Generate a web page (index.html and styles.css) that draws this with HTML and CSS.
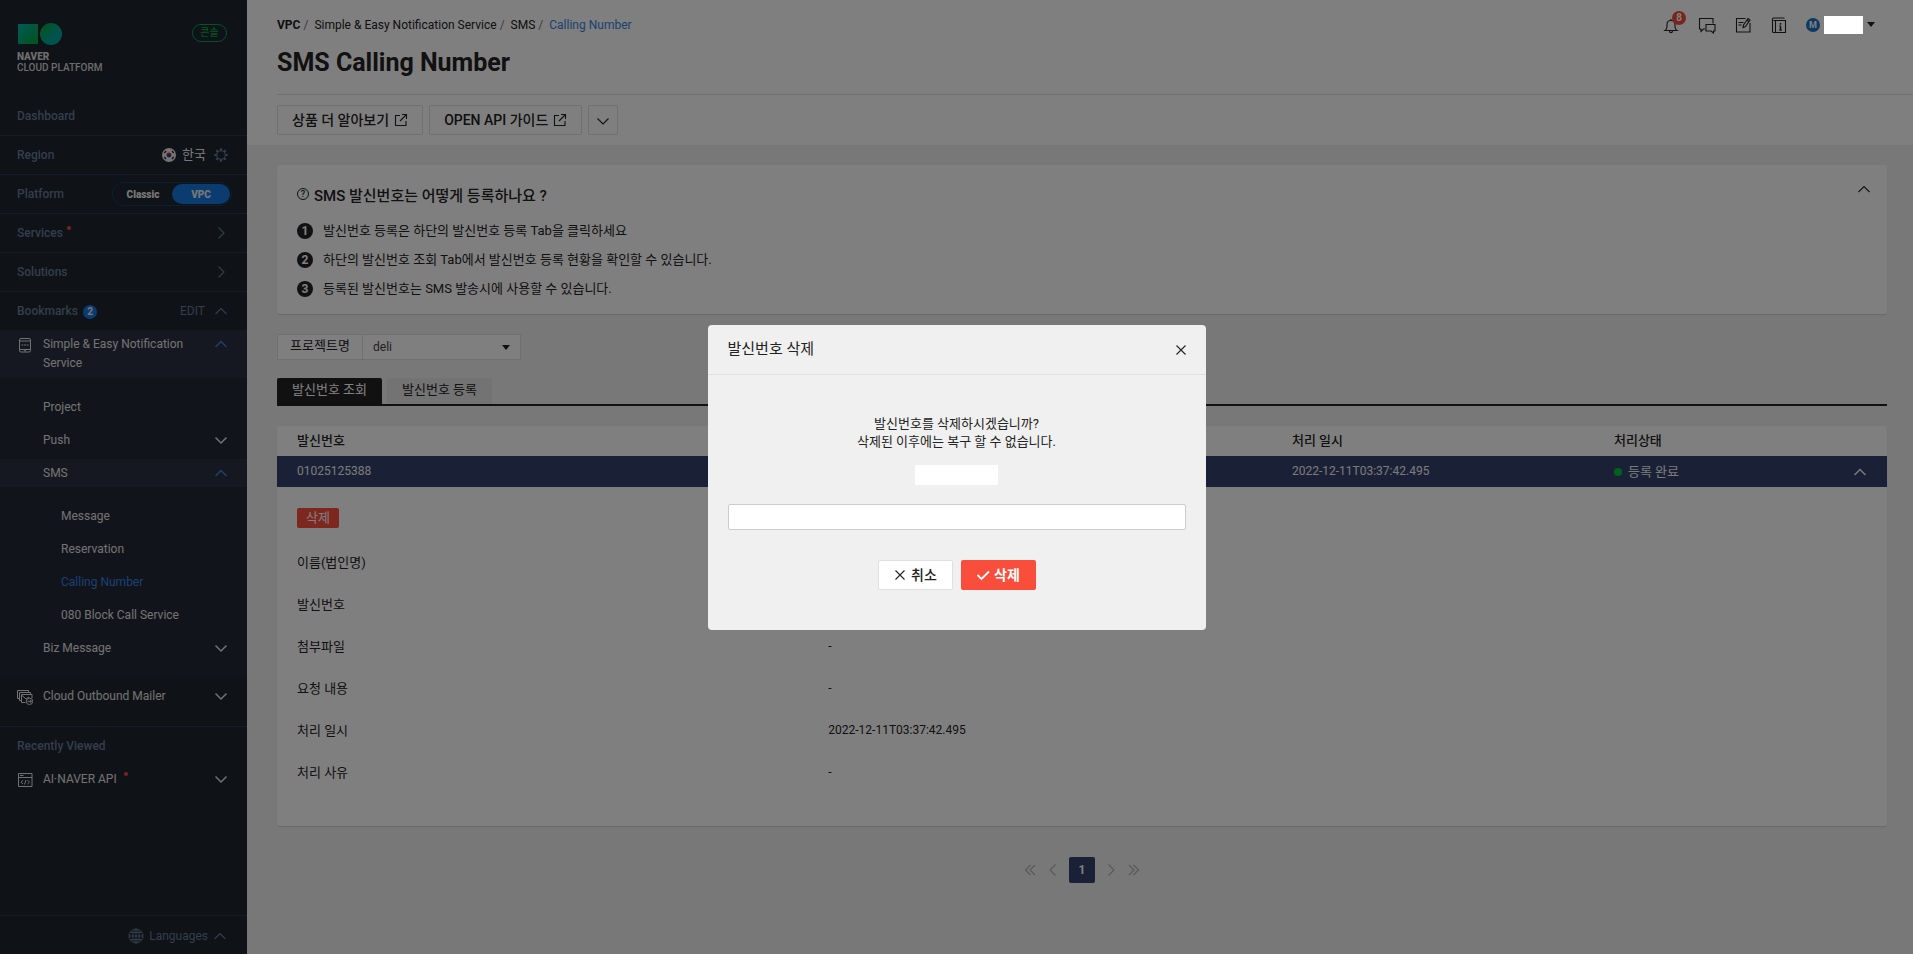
FILE: index.html
```html
<!DOCTYPE html>
<html lang="ko">
<head>
    <meta charset="UTF-8">
    <meta name="viewport" content="width=device-width, initial-scale=1.0">
    <title>SMS Calling Number</title>
    <link rel="stylesheet" href="styles.css">
</head>
<body>
    <svg class="sprite" width="0" height="0" aria-hidden="true">
        <symbol id="up" viewBox="0 0 14 14"><path d="M1.500 10 7 4.500 12.500 10"/></symbol>
        <symbol id="down" viewBox="0 0 14 14"><path d="M1.500 4.500 7 10 12.500 4.500"/></symbol>
        <symbol id="right" viewBox="0 0 14 14"><path d="M4.500 1.500 10 7 4.500 12.500"/></symbol>
        <symbol id="left" viewBox="0 0 14 14"><path d="M9.500 1.500 4 7 9.500 12.500"/></symbol>
        <symbol id="close" viewBox="0 0 14 14"><path d="M2.500 2.500l9 9M11.500 2.500l-9 9"/></symbol>
        <symbol id="external" viewBox="0 0 14 14"><path d="M6 2.500H1.500v10H12V8M8 1.500h4.500V6M12.500 1.500 6 8"/></symbol>
    </svg>

    <div class="app">
        <aside class="sidebar">
            <div class="brand">
                <a class="logo" href="#">
                    <svg width="46" height="22" viewBox="0 0 46 22">
                        <defs>
                            <linearGradient id="g1" x1="0" y1="0" x2="1" y2="1"><stop offset="0" stop-color="#00b3b0"/><stop offset="1" stop-color="#00a832"/></linearGradient>
                            <linearGradient id="g2" x1="0" y1="0" x2="1" y2="1"><stop offset=".1" stop-color="#00a83c"/><stop offset=".6" stop-color="#00a89a"/></linearGradient>
                        </defs>
                        <path d="M1 1h20v20H1z" fill="url(#g1)"/>
                        <circle cx="34" cy="11" r="11" fill="url(#g2)"/>
                    </svg>
                    <strong>NAVER</strong>
                    <span>CLOUD PLATFORM</span>
                </a>
                <a class="console" href="#">콘솔</a>
            </div>

            <nav>
                <div class="row"><a href="#">Dashboard</a></div>
                <div class="row">
                    <span>Region</span>
                    <button class="region">
                        <svg width="14" height="14" viewBox="0 0 14 14">
                            <circle cx="7" cy="7" r="7" fill="#e8e8e8"/>
                            <path d="M4.500 7a2.500 2.500 0 0 1 5 0z" fill="#c8203a"/><path d="M4.500 7a2.500 2.500 0 0 0 5 0z" fill="#1c3f94"/>
                            <path d="M2.300 5 4 3M10 3l1.700 2M2.300 9 4 11M10 11l1.700-2" stroke="#222" stroke-width="1.300"/>
                        </svg>
                        한국
                        <svg class="icon gear" width="14" height="14" viewBox="0 0 14 14"><circle cx="7" cy="7" r="4.300"/><path d="M7 .3v2.400M7 11.300v2.400M.3 7h2.400M11.300 7h2.400M2.300 2.300l1.600 1.600M10.100 10.100l1.600 1.600M11.700 2.300l-1.600 1.600M3.900 10.100l-1.600 1.600" stroke-width="2.200"/></svg>
                    </button>
                </div>
                <div class="row platform">
                    <span>Platform</span>
                    <div class="toggle"><button>Classic</button><button class="on">VPC</button></div>
                </div>
                <div class="row"><a href="#">Services<i class="new"></i></a><svg class="icon"><use href="#right"/></svg></div>
                <div class="row"><a href="#">Solutions</a><svg class="icon"><use href="#right"/></svg></div>
                <div class="row last">
                    <span>Bookmarks<b class="count">2</b></span>
                    <button class="edit">EDIT <svg class="icon"><use href="#up"/></svg></button>
                </div>

                <a class="service open" href="#">
                    <svg class="icon s-icon" viewBox="0 0 16 16"><rect x="2.500" y="1.500" width="11" height="13.500" rx="1.500"/><path d="M2.500 4h11M2.500 12.500h11M4.500 8h1.800M7.100 8h1.800M9.700 8h1.800M7 13.800h2"/></svg>
                    <span>Simple &amp; Easy Notification Service</span>
                    <svg class="icon"><use href="#up"/></svg>
                </a>
                <ul class="menu">
                    <li><a href="#">Project</a></li>
                    <li><a href="#">Push<svg class="icon"><use href="#down"/></svg></a></li>
                    <li>
                        <a class="open" href="#">SMS<svg class="icon"><use href="#up"/></svg></a>
                        <ul class="submenu">
                            <li><a href="#">Message</a></li>
                            <li><a href="#">Reservation</a></li>
                            <li><a class="current" href="#">Calling Number</a></li>
                            <li><a href="#">080 Block Call Service</a></li>
                        </ul>
                    </li>
                    <li><a href="#">Biz Message<svg class="icon"><use href="#down"/></svg></a></li>
                </ul>
                <a class="service mailer" href="#">
                    <svg class="icon s-icon" viewBox="0 0 16 16"><path d="M2.500 9.500H.5V1.500h11v1.500M4.500 11.500H2.500V3.500h11V5M8.500 13.500h-4v-8H15V9M4.500 6l4.500 4 3-2"/><circle cx="12.500" cy="12.300" r="3.200"/><path d="M10.500 12.300h4M13 10.800l1.500 1.500-1.500 1.500"/></svg>
                    <span>Cloud Outbound Mailer</span>
                    <svg class="icon"><use href="#down"/></svg>
                </a>
                <div class="recent">
                    <h2>Recently Viewed</h2>
                    <a class="service" href="#">
                        <svg class="icon s-icon" viewBox="0 0 16 16"><path d="M1.500 1.500h13.500v13H1.500zM1.500 5.500H15M3 3.500h3.500M6 8.200 4 10.200l2 1.800M10.500 8.200l2 2-2 1.800M9 8l-1.500 4.500"/></svg>
                        <span>AI·NAVER API<i class="new"></i></span>
                        <svg class="icon"><use href="#down"/></svg>
                    </a>
                </div>
            </nav>

            <button class="languages">
                <svg class="icon globe" width="16" height="16" viewBox="0 0 16 16"><circle cx="8" cy="8" r="7"/><ellipse cx="8" cy="8" rx="3.200" ry="7"/><path d="M8 1v14M1 8h14M2.200 4.500h11.600M2.200 11.500h11.600"/></svg>
                Languages
                <svg class="icon"><use href="#up"/></svg>
            </button>
        </aside>

        <main class="page">
            <header class="header">
                <div class="topbar">
                    <nav class="breadcrumb">
                        <a href="#"><b>VPC</b></a><i>/</i><a href="#">Simple &amp; Easy Notification Service</a><i>/</i><a href="#">SMS</a><i>/</i><a class="current" href="#">Calling Number</a>
                    </nav>
                    <div class="tools">
                        <button class="bell" aria-label="알림">
                            <svg class="icon" viewBox="0 0 18 18"><path d="M3 14.500h12c-1.500-1-2-2.500-2-4V8.500c0-2.500-1.500-4-4-4s-4 1.500-4 4v2c0 1.500-.5 3-2 4zM9 4.500V3M7.500 15c0 2.200 3 2.200 3 0"/></svg>
                            <b>8</b>
                        </button>
                        <button aria-label="문의"><svg class="icon" viewBox="0 0 18 18"><path d="M7 13H5.500L3 15.500V13H1.500V2.500h13.500v5M8 8.500h9v6.500h-1.500v2L13 15H8z"/></svg></button>
                        <button aria-label="설문"><svg class="icon" viewBox="0 0 18 18"><path d="M11.500 2.500h-9v13.500h13.500V7M4.500 6.500h5M4.500 9h3M9 11.500l.5-2.500L14 2.500l2 1.500L11.500 10.500zM13 4.200l2 1.500"/></svg></button>
                        <button aria-label="가이드"><svg class="icon" viewBox="0 0 18 18"><path d="M3.500 4.500h12v12h-12c-.8 0-1-.5-1-1V3c0-.8.5-1 1-1h11M5.500 4.500v12"/><path d="M10.500 7v1.800M10.500 10v4M9.500 10h1M9.300 14h2.400" stroke-width="1.500"/></svg></button>
                        <button class="user" aria-label="사용자"><b>M</b><span class="user-name"></span><i class="caret"></i></button>
                    </div>
                </div>
                <h1>SMS Calling Number</h1>
                <div class="actions">
                    <button class="btn">상품 더 알아보기 <svg class="icon"><use href="#external"/></svg></button>
                    <button class="btn">OPEN API 가이드 <svg class="icon"><use href="#external"/></svg></button>
                    <button class="btn more" aria-label="더보기"><svg class="icon"><use href="#down"/></svg></button>
                </div>
            </header>

            <div class="content">
                <section class="card guide">
                    <button class="fold" aria-label="접기"><svg class="icon"><use href="#up"/></svg></button>
                    <h2><span class="help">?</span>SMS 발신번호는 어떻게 등록하나요 ?</h2>
                    <ol>
                        <li><b>1</b><span>발신번호 등록은 하단의 발신번호 등록 Tab을 클릭하세요</span></li>
                        <li><b>2</b><span>하단의 발신번호 조회 Tab에서 발신번호 등록 현황을 확인할 수 있습니다.</span></li>
                        <li><b>3</b><span>등록된 발신번호는 SMS 발송시에 사용할 수 있습니다.</span></li>
                    </ol>
                </section>

                <div class="filter">
                    <label for="project">프로젝트명</label>
                    <div class="select">
                        <select id="project"><option>deli</option></select>
                        <i class="caret"></i>
                    </div>
                </div>

                <div class="tabs">
                    <button class="on">발신번호 조회</button>
                    <button>발신번호 등록</button>
                </div>

                <section class="card list">
                    <table class="numbers">
                        <thead>
                            <tr><th class="c-number">발신번호</th><th class="c-date">처리 일시</th><th>처리상태</th></tr>
                        </thead>
                        <tbody>
                            <tr>
                                <td>01025125388</td>
                                <td>2022-12-11T03:37:42.495</td>
                                <td><div class="status"><i></i>등록 완료<svg class="icon"><use href="#up"/></svg></div></td>
                            </tr>
                        </tbody>
                    </table>
                    <button class="delete">삭제</button>
                    <table class="detail">
                        <tr><th>이름(법인명)</th><td></td></tr>
                        <tr><th>발신번호</th><td></td></tr>
                        <tr><th>첨부파일</th><td>-</td></tr>
                        <tr><th>요청 내용</th><td>-</td></tr>
                        <tr><th>처리 일시</th><td>2022-12-11T03:37:42.495</td></tr>
                        <tr><th>처리 사유</th><td>-</td></tr>
                    </table>
                </section>

                <nav class="pagination">
                    <button aria-label="처음"><svg class="icon" viewBox="0 0 14 14"><path d="M7.500 2 2.500 7l5 5M12 2 7 7l5 5"/></svg></button>
                    <button aria-label="이전"><svg class="icon"><use href="#left"/></svg></button>
                    <button class="on">1</button>
                    <button aria-label="다음"><svg class="icon"><use href="#right"/></svg></button>
                    <button aria-label="마지막"><svg class="icon" viewBox="0 0 14 14"><path d="M2 2l5 5-5 5M6.500 2l5 5-5 5"/></svg></button>
                </nav>
            </div>
        </main>
    </div>

    <div class="overlay">
        <div class="modal" role="dialog" aria-labelledby="modalTitle">
            <div class="modal-head">
                <h2 id="modalTitle">발신번호 삭제</h2>
                <button class="close" aria-label="닫기"><svg class="icon"><use href="#close"/></svg></button>
            </div>
            <div class="modal-body">
                <label for="confirmNumber">발신번호를 삭제하시겠습니까?<br>삭제된 이후에는 복구 할 수 없습니다.</label>
                <div class="target"></div>
                <input id="confirmNumber" type="text">
                <div class="modal-buttons">
                    <button class="cancel"><svg class="icon"><use href="#close"/></svg>취소</button>
                    <button class="ok"><svg class="icon" viewBox="0 0 14 14"><path d="M1.500 7l4 4L13 3.500"/></svg>삭제</button>
                </div>
            </div>
        </div>
    </div>
</body>
</html>
```

FILE: styles.css
```css
* {
    box-sizing: border-box;
}
body {
    margin: 0;
    background: #f0f0f0;
    color: #222;
    font-family: Roboto, "Noto Sans CJK KR", sans-serif;
    font-size: 12px;
}
a {
    color: inherit;
    text-decoration: none;
}
button {
    margin: 0;
    padding: 0;
    border: 0;
    background: none;
    color: inherit;
    font: inherit;
    cursor: pointer;
}
h1, h2, ul, ol {
    margin: 0;
    padding: 0;
}
li {
    list-style: none;
}
.sprite {
    position: absolute;
}
.icon {
    width: 14px;
    height: 14px;
    flex: none;
    fill: none;
    stroke: currentColor;
    stroke-width: 1.1;
}
.app {
    display: flex;
    min-height: 100vh;
}

/* sidebar */
.sidebar {
    width: 247px;
    flex: none;
    display: flex;
    flex-direction: column;
    background: #1e242e;
    color: #687c98;
    font-weight: 500;
}
.brand {
    display: flex;
    justify-content: space-between;
    align-items: flex-start;
    height: 97px;
    padding: 23px 20px 0 17px;
}
.logo {
    display: flex;
    flex-direction: column;
    color: #d8d8d8;
    font-size: 10px;
    line-height: 11px;
}
.logo svg {
    margin-bottom: 6px;
}
.logo strong {
    font-weight: 900;
}
.console {
    margin-top: 1px;
    width: 35px;
    height: 18px;
    border: 1px solid #00a84a;
    border-radius: 9px;
    color: #00a84a;
    font-size: 10px;
    line-height: 15px;
    text-align: center;
}
.row {
    display: flex;
    justify-content: space-between;
    align-items: center;
    height: 39px;
    padding: 0 19px 0 17px;
    border-bottom: 1px solid #303850;
}
.row.last {
    height: 38px;
    border: 0;
}
.row.platform {
    padding-right: 15px;
}
.region {
    display: flex;
    align-items: center;
    gap: 6px;
    color: #eee;
    font-size: 13px;
    font-weight: 400;
    line-height: 16px;
}
.gear {
    margin-left: 2px;
    color: #687c98;
}
.toggle {
    display: flex;
    width: 120px;
    height: 24px;
    padding: 1px;
    border: 1px solid #143e68;
    border-radius: 12px;
    color: #eee;
    font-size: 10px;
    font-weight: 900;
}
.toggle button {
    flex: 1;
}
.toggle .on {
    border-radius: 10px;
    background: #1478e0;
}
.new {
    display: inline-block;
    width: 4px;
    height: 4px;
    margin-left: 4px;
    border-radius: 50%;
    background: #f04a3e;
    vertical-align: 7px;
}
.service .new {
    margin-left: 7px;
}
.count {
    display: inline-block;
    width: 14px;
    height: 14px;
    margin-left: 5px;
    border-radius: 50%;
    background: #1478e0;
    color: #eee;
    font-size: 10px;
    line-height: 14px;
    text-align: center;
}
.edit {
    display: flex;
    align-items: center;
    gap: 9px;
    font-weight: 400;
}
.service {
    display: flex;
    align-items: flex-start;
    gap: 10px;
    padding: 5px 19px 5px 17px;
    color: #e4e4e4;
    font-weight: 400;
    line-height: 19px;
}
.service span {
    flex: 1;
}
.service .icon {
    margin-top: 2px;
    stroke-width: 1.5;
}
.service .s-icon {
    width: 16px;
    height: 16px;
    stroke-width: 1;
}
.open {
    background: #2a3040;
}
.service.open {
    height: 48px;
}
.open .icon:last-child {
    color: #3484e0;
}
.menu {
    padding: 15px 0;
    background: #222835;
    color: #e4e4e4;
    font-weight: 400;
}
.menu, .submenu {
    display: flex;
    flex-direction: column;
    gap: 5px;
}
.menu a {
    display: flex;
    justify-content: space-between;
    align-items: center;
    height: 28px;
    padding: 0 19px 0 43px;
}
.menu .icon {
    stroke-width: 1.5;
}
.submenu {
    padding-top: 15px;
}
.menu .submenu a {
    padding-left: 61px;
}
.current, .menu .current {
    color: #3484e0;
}
.mailer {
    padding-top: 10px;
    padding-bottom: 20px;
}
.recent {
    border-top: 1px solid #303850;
}
.recent h2 {
    padding: 10px 17px 5px;
    font-size: 12px;
    font-weight: 500;
    line-height: 18px;
}
.recent .service {
    padding-top: 10px;
}
.languages {
    display: flex;
    justify-content: flex-end;
    align-items: center;
    gap: 5px;
    height: 39px;
    margin-top: auto;
    padding: 2px 20px 0 0;
    border-top: 1px solid #303850;
    font-weight: 400;
}
.globe {
    width: 16px;
    height: 16px;
    stroke-width: 1;
}

/* page header */
.page {
    flex: 1;
    min-width: 0;
}
.header {
    height: 145px;
    padding: 0 0 0 30px;
    background: #fff;
}
.topbar {
    display: flex;
    justify-content: space-between;
    align-items: center;
    height: 49px;
    padding-right: 38px;
}
.breadcrumb i {
    margin: 0 6px 0 3px;
    color: #777;
    font-style: normal;
}
.breadcrumb b {
    font-weight: 700;
}
.tools {
    display: flex;
    align-items: center;
    gap: 18px;
}
.tools button {
    display: flex;
}
.tools .icon {
    width: 18px;
    height: 18px;
}
.bell {
    position: relative;
}
.bell b {
    position: absolute;
    top: -5px;
    right: -6px;
    width: 14px;
    height: 14px;
    border-radius: 50%;
    background: #f04a3e;
    color: #fff;
    font-size: 10px;
    line-height: 14px;
}
.tools .user {
    align-items: center;
    gap: 4px;
}
.user b {
    width: 14px;
    height: 14px;
    border-radius: 50%;
    background: #1c72c4;
    color: #fff;
    font-size: 9px;
    line-height: 15px;
}
/* stays above the dimmed page */
.user-name {
    position: relative;
    z-index: 20;
    width: 39px;
    height: 18px;
    background: #fff;
}
.caret {
    border: 4px solid transparent;
    border-top: 5px solid #222;
    border-bottom: 0;
}
h1 {
    height: 45px;
    color: #222;
    font-size: 25px;
    font-weight: 700;
    line-height: 28px;
}
.actions {
    display: flex;
    gap: 6px;
    padding-top: 10px;
    border-top: 1px solid #e0e0e0;
}
.btn {
    display: flex;
    justify-content: center;
    align-items: center;
    gap: 5px;
    height: 30px;
    padding: 0 14px 2px;
    border: 1px solid #e0e0e0;
    border-radius: 2px;
    font-size: 14px;
    font-weight: 500;
}
.btn .icon {
    margin-top: 2px;
}
.btn.more {
    width: 30px;
    padding: 0;
}

/* content */
.content {
    padding: 20px 26px 20px 30px;
}
.card {
    border-radius: 3px;
    background: #fff;
    box-shadow: 0 1px 1px rgba(0, 0, 0, .12);
}
.guide {
    height: 149px;
    padding: 17px 16px 0 20px;
}
.guide h2 {
    display: flex;
    align-items: center;
    height: 24px;
    font-size: 15px;
    font-weight: 500;
}
.help {
    width: 12px;
    height: 12px;
    margin-right: 5px;
    border: 1px solid #222;
    border-radius: 50%;
    font-size: 9px;
    line-height: 11px;
    text-align: center;
}
.guide ol {
    padding-top: 10px;
    font-size: 13px;
}
.guide li {
    display: flex;
    align-items: center;
    gap: 10px;
    height: 29px;
}
.guide li span {
    padding-bottom: 2px;
}
.guide li b {
    width: 16px;
    height: 16px;
    border-radius: 50%;
    background: #222;
    color: #fff;
    font-size: 12px;
    line-height: 16px;
    text-align: center;
}
.fold {
    float: right;
}
.filter {
    display: flex;
    width: 244px;
    height: 26px;
    margin-top: 20px;
    border: 1px solid #e0e0e0;
    background: #fff;
}
.filter label {
    width: 85px;
    border-right: 1px solid #e0e0e0;
    font-size: 13px;
    line-height: 22px;
    text-align: center;
}
.select {
    display: flex;
    flex: 1;
    align-items: center;
    padding-right: 10px;
}
.select select {
    flex: 1;
    height: 24px;
    padding: 0 10px;
    border: 0;
    appearance: none;
    background: none;
    color: #444;
    font: inherit;
}
.tabs {
    display: flex;
    gap: 5px;
    margin-top: 18px;
    border-bottom: 2px solid #222;
}
.tabs button {
    width: 105px;
    height: 26px;
    padding-bottom: 2px;
    border-radius: 2px 2px 0 0;
    background: #e6e6e6;
    font-size: 13px;
    line-height: 22px;
}
.tabs .on {
    background: #222;
    color: #fff;
}
.list {
    margin-top: 20px;
    padding-bottom: 33px;
}
table {
    width: 100%;
    border-collapse: collapse;
    table-layout: fixed;
}
th, td {
    padding: 0 20px;
    font-weight: 400;
    text-align: left;
}
.numbers th {
    height: 30px;
    padding-bottom: 3px;
    font-size: 13px;
    font-weight: 500;
}
.numbers td {
    height: 31px;
    padding-bottom: 2px;
    background: #34426f;
    color: #f4f4f4;
}
.c-number {
    width: 61.8%;
}
.c-date {
    width: 20%;
}
.status {
    display: flex;
    align-items: center;
    font-size: 13px;
}
.status i {
    width: 8px;
    height: 8px;
    margin: 2px 6px 0 0;
    border-radius: 50%;
    background: #00c03c;
}
.status .icon {
    margin: 2px 0 0 auto;
    stroke-width: 1.5;
}
.delete {
    display: block;
    width: 42px;
    height: 20px;
    margin: 21px 20px 13px;
    border-radius: 2px;
    background: #fa4e3c;
    color: #fff;
    font-size: 13px;
    line-height: 18px;
}
.detail th {
    width: 33%;
    height: 42px;
    padding-bottom: 2px;
    font-size: 13px;
}
.pagination {
    display: flex;
    justify-content: center;
    align-items: center;
    gap: 9px;
    margin-top: 31px;
    color: #b0b0b0;
}
.pagination button {
    display: flex;
}
.pagination .on {
    justify-content: center;
    align-items: center;
    width: 26px;
    height: 26px;
    border-radius: 2px;
    background: #34426f;
    color: #fff;
    font-weight: 700;
}

/* delete dialog */
.overlay {
    position: fixed;
    inset: 0;
    z-index: 10;
    display: flex;
    justify-content: center;
    align-items: center;
    background: rgba(0, 0, 0, .5);
}
.modal {
    width: 498px;
    border-radius: 4px;
    background: #f0f0f0;
}
.modal-head {
    display: flex;
    justify-content: space-between;
    align-items: center;
    height: 50px;
    padding: 0 18px 0 20px;
    border-bottom: 1px solid #e0e0e0;
}
.modal-head h2 {
    padding-bottom: 3px;
    font-size: 15px;
    font-weight: 400;
}
.close {
    display: flex;
    padding-top: 2px;
}
.modal-body {
    display: flex;
    flex-direction: column;
    align-items: center;
    padding: 40px 20px;
}
.modal-body label {
    font-size: 13px;
    line-height: 18px;
    text-align: center;
}
.target {
    width: 83px;
    height: 20px;
    margin: 14px 0 19px;
    background: #fff;
}
.modal-body input {
    width: 100%;
    height: 26px;
    padding: 0 8px;
    border: 1px solid #ccc;
    border-radius: 2px;
    font: inherit;
}
.modal-buttons {
    display: flex;
    gap: 8px;
    margin-top: 30px;
    font-size: 14px;
}
.modal-buttons button {
    display: flex;
    justify-content: center;
    align-items: center;
    gap: 4px;
    width: 75px;
    height: 30px;
    padding-bottom: 2px;
    border-radius: 2px;
}
.modal-buttons .cancel {
    border: 1px solid #e0e0e0;
    background: #fff;
    font-weight: 500;
}
.modal-buttons .icon {
    margin-top: 2px;
}
.modal-buttons .ok {
    background: #fa4e3c;
    color: #fff;
    font-weight: 700;
}
.ok .icon {
    stroke-width: 1.8;
}
```
